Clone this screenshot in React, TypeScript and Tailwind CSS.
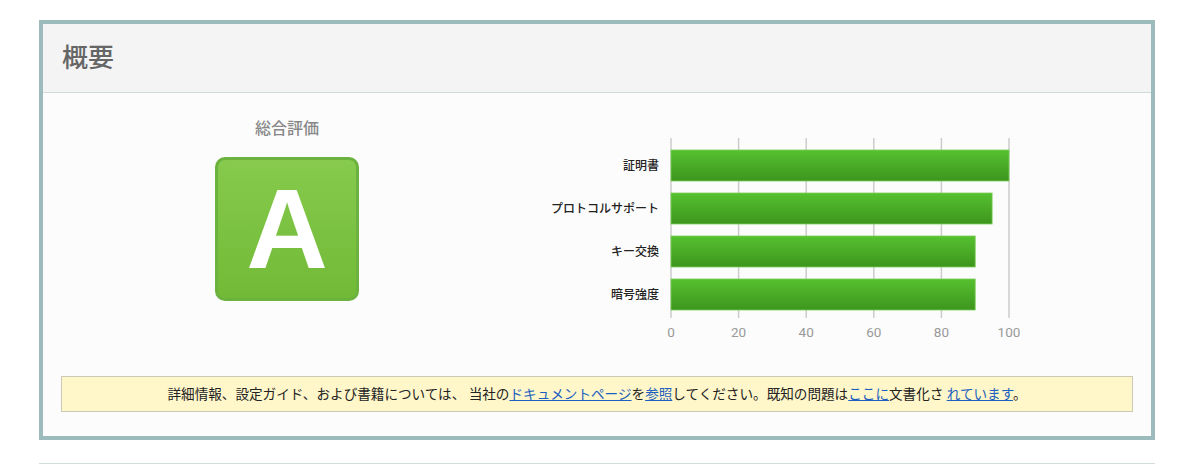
import React from "react";

interface Score {
  label: string;
  value: number;
}

const scores: Score[] = [
  { label: "証明書", value: 100 },
  { label: "プロトコルサポート", value: 95 },
  { label: "キー交換", value: 90 },
  { label: "暗号強度", value: 90 },
];

const AXIS_X = 158;
const UNIT = 3.38;

function ScoreChart() {
  const ticks = [0, 20, 40, 60, 80, 100];
  return (
    <svg width="530" height="226" viewBox="0 0 530 226" className="block">
      <defs>
        <linearGradient id="bar" x1="0" y1="0" x2="0" y2="1">
          <stop offset="0%" stopColor="#56c130" />
          <stop offset="100%" stopColor="#3d951d" />
        </linearGradient>
      </defs>
      {ticks.map((t) => (
        <line
          key={t}
          x1={AXIS_X + t * UNIT}
          x2={AXIS_X + t * UNIT}
          y1={20}
          y2={200}
          stroke="#cccccc"
          strokeWidth={1.5}
        />
      ))}
      {scores.map((s, i) => {
        const y = 32 + i * 43;
        return (
          <g key={s.label}>
            <rect
              x={AXIS_X}
              y={y}
              width={s.value * UNIT}
              height={31}
              fill="url(#bar)"
              stroke="#7ccd58"
              strokeWidth={0.8}
            />
            <text
              x={146}
              y={y + 20}
              textAnchor="end"
              fontSize="12"
              fontWeight={500}
              fill="#222222"
              fontFamily="Roboto, 'Noto Sans CJK JP', sans-serif"
            >
              {s.label}
            </text>
          </g>
        );
      })}
      {ticks.map((t) => (
        <text
          key={t}
          x={AXIS_X + t * UNIT}
          y={219}
          textAnchor="middle"
          fontSize="13.5"
          fill="#999999"
          fontFamily="Roboto, sans-serif"
        >
          {t}
        </text>
      ))}
    </svg>
  );
}

export default function App() {
  return (
    <div className="w-[1200px] h-[464px] bg-white pt-[20px] font-['Roboto','Noto_Sans_CJK_JP',sans-serif] overflow-hidden">
      <div className="ml-[39px] w-[1116px] border-4 border-[#9dbbbd]">
        {/* Header */}
        <div className="h-[69px] bg-[#f4f4f4] border-b border-[#cfd9db] flex items-center pl-[19px]">
          <h1 className="text-[26px] font-medium text-[#666666] leading-none">概要</h1>
        </div>

        {/* Body */}
        <div className="bg-[#fcfcfc] px-[18px] pt-[25px] pb-[24px]">
          <div className="h-[226px] flex">
            <div className="w-[452px] flex flex-col items-center">
              <div className="text-[16px] font-medium leading-[22px] text-[#888888]">総合評価</div>
              <div className="mt-[17px] w-[144px] h-[144px] rounded-[10px] border-[3px] border-[#6cb23e] bg-gradient-to-b from-[#87ca4d] to-[#71ba36] flex items-center justify-center">
                <span className="font-['Liberation_Sans',Arial,sans-serif] font-bold text-[113px] leading-none text-white">
                  A
                </span>
              </div>
            </div>
            <ScoreChart />
          </div>

          <div className="mt-[32px] h-[36px] bg-[#fff6c9] border border-[#cbc8b4] flex items-center justify-center text-[13.6px] text-[#222222]">
            <p>
              詳細情報、設定ガイド、および書籍については、 当社の
              <a href="#" className="text-[#1c5fc0] underline">ドキュメントページ</a>
              を
              <a href="#" className="text-[#1c5fc0] underline">参照</a>
              してください。既知の問題は
              <a href="#" className="text-[#1c5fc0] underline">ここに</a>
              文書化さ{" "}
              <a href="#" className="text-[#1c5fc0] underline">れています</a>
              。
            </p>
          </div>
        </div>
      </div>
      <div className="ml-[39px] w-[1116px] mt-[23px] border-t border-[#d3dbdc]" />
    </div>
  );
}
